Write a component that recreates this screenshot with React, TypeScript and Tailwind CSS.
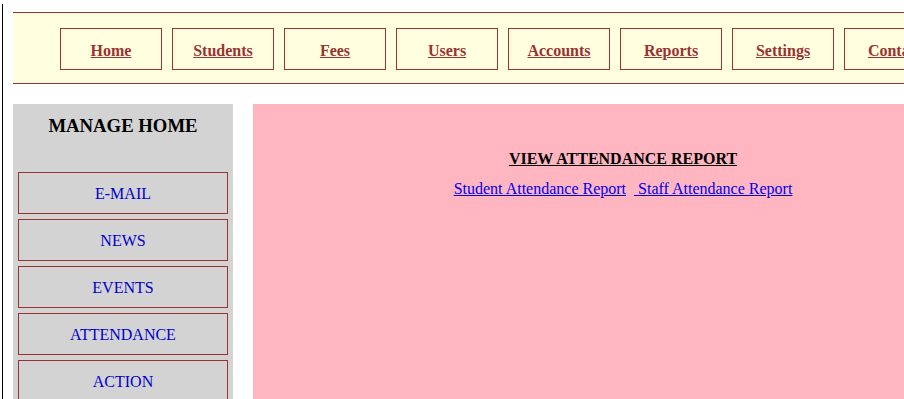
const navItems = ["Home", "Students", "Fees", "Users", "Accounts", "Reports", "Settings", "Contact"];
const sideItems = ["E-MAIL", "NEWS", "EVENTS", "ATTENDANCE", "ACTION"];

export default function App() {
  return (
    <div className="h-[399px] w-[904px] overflow-hidden bg-white pt-[4px] font-['Liberation_Serif',serif]">
      <div className="ml-[2px] h-[395px] w-[1000px] border-l border-black pl-[10px] pt-[8px]">
        {/* top menu */}
        <div className="h-[72px] w-[980px] border-y border-[#993333] bg-[#FFFFE0] pl-[47px] pt-[15px]">
          <div className="flex gap-[10px]">
            {navItems.map((item) => (
              <a
                key={item}
                href="#"
                className="flex h-[42px] w-[102px] shrink-0 items-center justify-center border border-[#993333] pt-[3px] text-[16px] font-bold text-[#993333] underline"
              >
                {item}
              </a>
            ))}
          </div>
        </div>

        <div className="mt-[20px] flex gap-[20px]">
          {/* sidebar */}
          <div className="h-[300px] w-[220px] shrink-0 bg-[#D3D3D3] px-[5px]">
            <h3 className="pt-[11px] text-center text-[18.72px] font-bold leading-[22px] text-black">MANAGE HOME</h3>
            <div className="mt-[35px] flex flex-col gap-[5px]">
              {sideItems.map((item) => (
                <a
                  key={item}
                  href="#"
                  className="flex h-[42px] items-center justify-center border border-[#993333] pt-[2px] text-[16px] text-[#0000CC]"
                >
                  {item}
                </a>
              ))}
            </div>
          </div>

          {/* content */}
          <div className="h-[300px] w-[740px] shrink-0 bg-[#FFB6C1] pt-[45px] text-center">
            <h4 className="text-[16px] font-bold leading-[20px] text-black underline">VIEW ATTENDANCE REPORT</h4>
            <div className="mt-[10px] text-[16px] leading-[20px]">
              <a href="#" className="text-[#0000EE] underline">Student Attendance Report</a>
              <span>{"\u00a0\u00a0"}</span>
              <a href="#" className="text-[#0000EE] underline">{"\u00a0Staff Attendance Report"}</a>
            </div>
          </div>
        </div>
      </div>
    </div>
  );
}
